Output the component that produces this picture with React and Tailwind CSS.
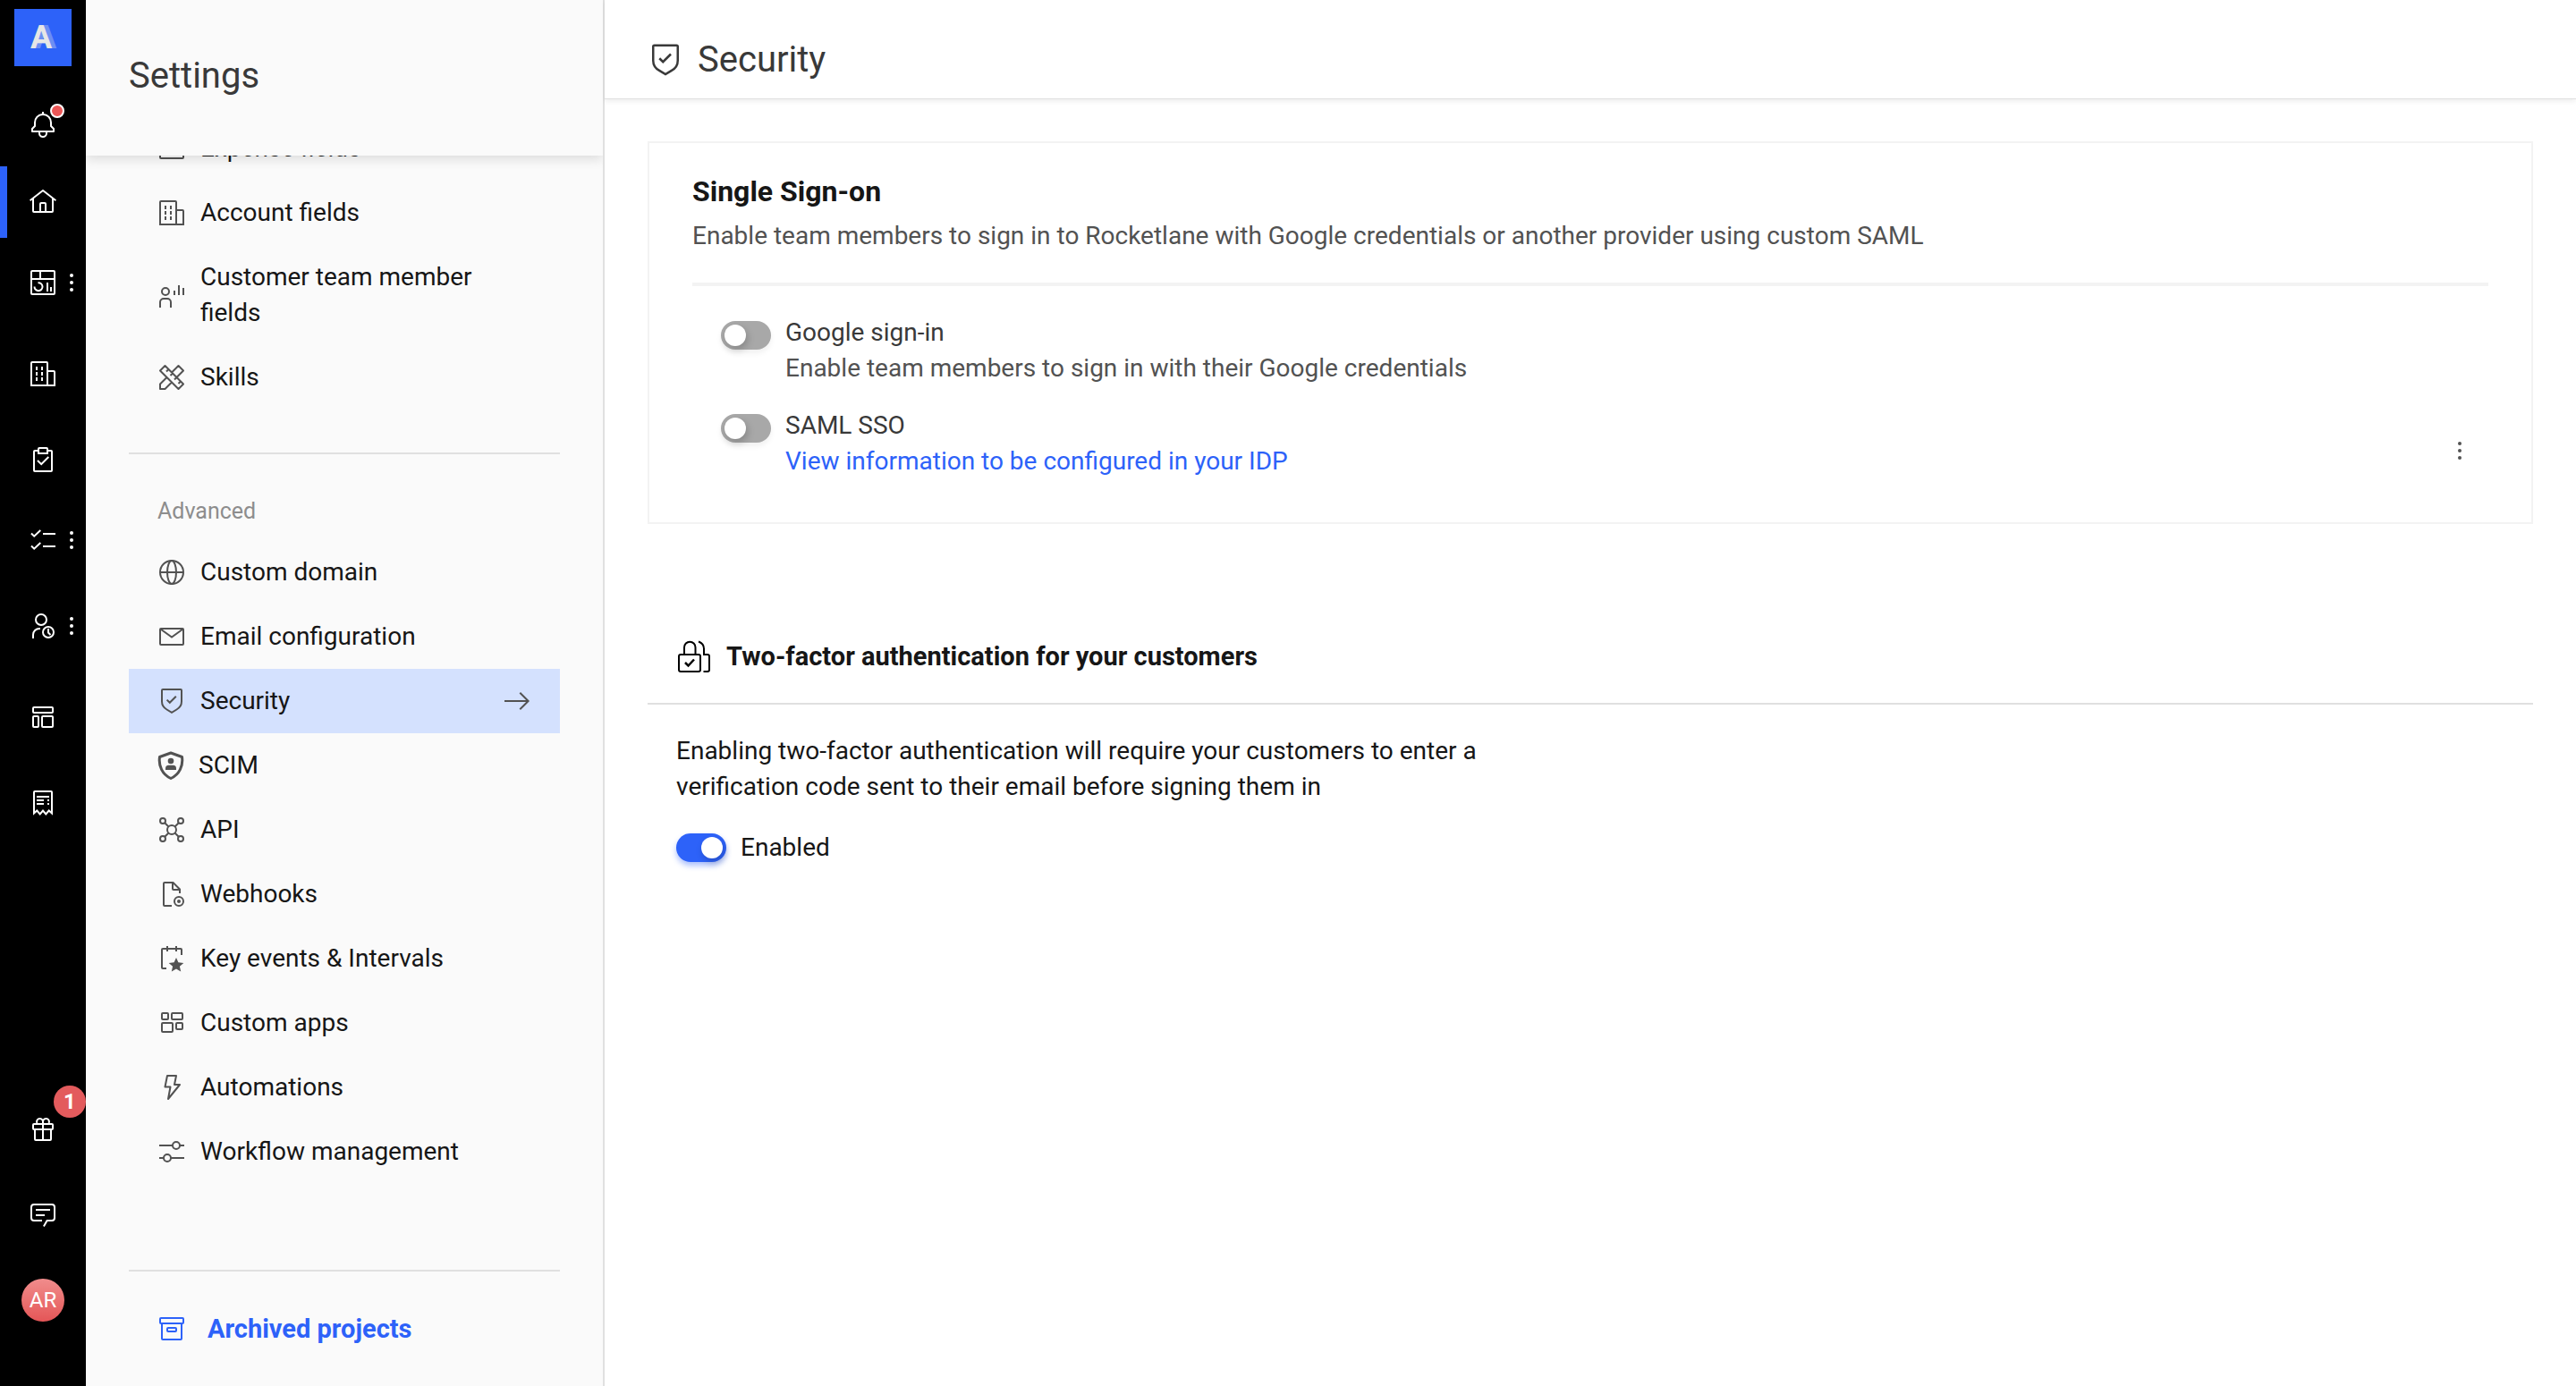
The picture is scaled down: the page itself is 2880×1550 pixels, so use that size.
import { useState } from "react";

const Icon = ({ className = "size-8", box = "0 0 32 32", width = 2, children }) => (
  <svg
    viewBox={box}
    className={`shrink-0 ${className}`}
    fill="none"
    stroke="currentColor"
    strokeWidth={width}
    aria-hidden="true"
  >
    {children}
  </svg>
);

const BellIcon = () => (
  <Icon>
    <path
      fill="currentColor"
      stroke="none"
      d="M28.7 19.3 26 16.6V13a10 10 0 0 0-9-9.95V1h-2v2.05A10 10 0 0 0 6 13v3.6l-2.7 2.7A1 1 0 0 0 3 20v3a1 1 0 0 0 1 1h7v.8a5.15 5.15 0 0 0 4.5 5.2A5 5 0 0 0 21 25v-1h7a1 1 0 0 0 1-1v-3a1 1 0 0 0-.3-.7ZM19 25a3 3 0 0 1-6 0v-1h6Zm8-3H5v-1.6l2.7-2.7A1 1 0 0 0 8 17v-4a8 8 0 0 1 16 0v4a1 1 0 0 0 .3.7l2.7 2.7Z"
    />
  </Icon>
);

const HomeIcon = () => (
  <Icon>
    <path
      fill="currentColor"
      stroke="none"
      d="M16.6 2.2a1 1 0 0 0-1.2 0L1 13.4 2.2 15 4 13.6V26a2 2 0 0 0 2 2h20a2 2 0 0 0 2-2V13.6l1.8 1.4 1.2-1.6ZM18 26h-4v-8h4Zm2 0v-8a2 2 0 0 0-2-2h-4a2 2 0 0 0-2 2v8H6V12l10-7.7L26 12v14Z"
    />
  </Icon>
);

const DashboardIcon = () => (
  <Icon>
    <rect x="3" y="3" width="26" height="26" rx="1" />
    <path d="M3 12h26M13 3v9M21 16v10M25 21v5M10.5 16.2a4.5 4.5 0 1 1-4 4.3" />
  </Icon>
);

const BuildingIcon = () => (
  <Icon>
    <path d="M21 29H3V4a1 1 0 0 1 1-1h16a1 1 0 0 1 1 1v25Zm0-16h7a1 1 0 0 1 1 1v15h-8" />
    <path d="M9 8v4M9 14v4M9 20v4M15 8v4M15 14v4M15 20v4" />
  </Icon>
);

const ClipboardIcon = () => (
  <Icon>
    <path d="M11 6H7a1 1 0 0 0-1 1v21a1 1 0 0 0 1 1h18a1 1 0 0 0 1-1V7a1 1 0 0 0-1-1h-4" />
    <path d="M12 3h8a1 1 0 0 1 1 1v5H11V4a1 1 0 0 1 1-1ZM10 17l4.2 4.2L22.3 13" />
  </Icon>
);

const ChecklistIcon = () => (
  <Icon>
    <path d="m3 8.5 3.2 3.2L13.3 5M16 9h14M3 22.5l3.2 3.2 7.1-6.7M16 23h14" />
  </Icon>
);

const UserClockIcon = () => (
  <Icon>
    <circle cx="14" cy="9" r="6" />
    <path d="M5 30v-4a7 7 0 0 1 7-7h1M22 19v4.5l2.5 2.5" />
    <circle cx="22" cy="23" r="6" />
  </Icon>
);

const TemplateIcon = () => (
  <Icon>
    <rect x="5" y="5" width="22" height="6" rx="1" />
    <rect x="5" y="15" width="6" height="12" rx="1" />
    <rect x="15" y="15" width="12" height="12" rx="1" />
  </Icon>
);

const ReceiptIcon = () => (
  <Icon>
    <path d="M6 27.5V4a1 1 0 0 1 1-1h18a1 1 0 0 1 1 1v23.5l-3.3-3-3.4 4-3.3-4-3.3 4-3.4-4Z" />
    <path d="M9 9h14M9 13h8M9 17h8M21 13h2M21 17h2" />
  </Icon>
);

const GiftIcon = () => (
  <Icon>
    <rect x="5" y="11" width="22" height="6" rx="1" />
    <path d="M7 17v11a1 1 0 0 0 1 1h16a1 1 0 0 0 1-1V17M16 8v21M16 11V7.5a3.5 3.5 0 1 0-6.5 2.5M16 7.5a3.5 3.5 0 1 1 6.5 2.5" />
  </Icon>
);

const ChatIcon = () => (
  <Icon>
    <path d="M15 23H6a3 3 0 0 1-3-3V8a3 3 0 0 1 3-3h20a3 3 0 0 1 3 3v12a3 3 0 0 1-3 3h-5.4l-3.7 6.5M8 11h16M8 17h10" />
  </Icon>
);

const MemberFieldsIcon = () => (
  <Icon>
    <circle cx="9" cy="12" r="4" />
    <path d="M3 30v-6a4 4 0 0 1 4-4h4a4 4 0 0 1 4 4v6M19 11v5M24 5v11M29 8v8" />
  </Icon>
);

const SkillsIcon = () => (
  <Icon>
    <path
      strokeLinejoin="round"
      d="M8.5 3 29 23.5 23.5 29 3 8.5ZM12.5 7 10 9.5M17 11.5 14.5 14M21.5 16 19 18.5M26 20.5 23.5 23M16 10.5 23.5 3 29 8.5 21.5 16M10.5 16 3 23.5V29h5.5l7.5-7.5"
    />
  </Icon>
);

const ExpenseIcon = () => (
  <Icon>
    <rect x="3" y="6" width="26" height="21" rx="1" />
    <path d="M3 12h26" />
  </Icon>
);

const GlobeIcon = () => (
  <Icon>
    <circle cx="16" cy="16" r="13" />
    <ellipse cx="16" cy="16" rx="5" ry="13" />
    <path d="M3 16h26" />
  </Icon>
);

const MailIcon = () => (
  <Icon>
    <rect x="3" y="7" width="26" height="18" rx="1" />
    <path d="m3.5 7.5 12.5 9 12.5-9" />
  </Icon>
);

const ShieldIcon = ({ className }) => (
  <Icon className={className}>
    <path d="M5 4a1 1 0 0 1 1-1h20a1 1 0 0 1 1 1v12.5c0 4-2 7-5.5 9L16 28.9l-5.5-3.4C7 23.5 5 20.5 5 16.5ZM10.6 14.6l3.2 3.2 7-7" />
  </Icon>
);

const ScimIcon = () => (
  <Icon className="h-8 w-[30px]" box="0 0 30 32" width={3}>
    <path
      strokeLinejoin="round"
      d="M15 2 27.5 6.5c1.5 10-3 19.5-12.5 24C5.5 26 1 16.5 2.5 6.5Z"
    />
    <g fill="currentColor" stroke="none">
      <circle cx="15" cy="11" r="3.3" />
      <path d="M9 21v-1.8a3.5 3.5 0 0 1 3.5-3.5h5a3.5 3.5 0 0 1 3.5 3.5V21Z" />
    </g>
  </Icon>
);

const ApiIcon = () => (
  <Icon>
    <circle cx="16" cy="16" r="5" />
    <circle cx="6" cy="6" r="3" />
    <circle cx="26" cy="6" r="3" />
    <circle cx="6" cy="26" r="3" />
    <circle cx="26" cy="26" r="3" />
    <path d="m8.2 8.2 4.3 4.3M23.8 8.2l-4.3 4.3M8.2 23.8l4.3-4.3M23.8 23.8l-4.3-4.3" />
  </Icon>
);

const WebhookIcon = () => (
  <Icon>
    <path d="M16 29H8a1 1 0 0 1-1-1V4a1 1 0 0 1 1-1h9.5l7.5 7.5V15M17 3v7a1 1 0 0 0 1 1h7" />
    <circle cx="24" cy="24" r="5" />
    <circle cx="24" cy="24" r="2" fill="currentColor" stroke="none" />
  </Icon>
);

const KeyEventsIcon = () => (
  <Icon>
    <path d="M10 27H6a1 1 0 0 1-1-1V6a1 1 0 0 1 1-1h20a1 1 0 0 1 1 1v6M11 2v6M21 2v6" />
    <path
      fill="currentColor"
      stroke="none"
      d="m21 15 2.4 5.3 5.9.6-4.4 3.9 1.3 5.7-5.2-2.9-5.2 2.9 1.3-5.7-4.4-3.9 5.9-.6Z"
    />
  </Icon>
);

const AppsIcon = () => (
  <Icon>
    <rect x="5" y="5" width="7" height="7" rx="1" />
    <rect x="16" y="5" width="12" height="7" rx="1" />
    <rect x="5" y="16" width="12" height="10" rx="1" />
    <rect x="21" y="16" width="7" height="7" rx="1" />
  </Icon>
);

const BoltIcon = () => (
  <Icon>
    <path strokeLinejoin="round" d="M11 3h10l-2 10h6L12 29l2.5-13.5h-6Z" />
  </Icon>
);

const WorkflowIcon = () => (
  <Icon>
    <circle cx="21" cy="9" r="4" />
    <circle cx="11" cy="23" r="4" />
    <path d="M2 9h15M25 9h5M2 23h5M15 23h15" />
  </Icon>
);

const ArchiveIcon = () => (
  <Icon>
    <rect x="3" y="4" width="26" height="6" rx="1" />
    <path d="M5 10v17a1 1 0 0 0 1 1h20a1 1 0 0 0 1-1V10" />
    <rect x="11" y="15" width="10" height="4" rx="1" />
  </Icon>
);

const ArrowIcon = () => (
  <Icon>
    <path d="M2 16h26M19.3 6.7l9.3 9.3-9.3 9.3" />
  </Icon>
);

const LocksIcon = () => (
  <Icon className="size-10 text-black" box="0 0 40 40" width={2}>
    <rect x="3" y="18" width="24" height="19" rx="2" />
    <path d="M9 18v-8a6 6 0 0 1 12.500 0v8M25 3.500c4 1.500 6 4 6 8V18h4a2 2 0 0 1 2 2v15a2 2 0 0 1-2 2h-4.500" />
    <path strokeWidth="2.500" d="m10 27 3.500 3.500 6.500-7" />
  </Icon>
);

const Dots = () => (
  <svg viewBox="0 0 4 20" className="h-5 w-1" fill="currentColor" aria-hidden="true">
    <circle cx="2" cy="2" r="2" />
    <circle cx="2" cy="10" r="2" />
    <circle cx="2" cy="18" r="2" />
  </svg>
);

const railItems = [
  { name: "Home", icon: <HomeIcon />, active: true },
  { name: "Dashboards", icon: <DashboardIcon />, more: true },
  { name: "Accounts", icon: <BuildingIcon /> },
  { name: "Projects", icon: <ClipboardIcon /> },
  { name: "Tasks", icon: <ChecklistIcon />, more: true },
  { name: "Resources", icon: <UserClockIcon />, more: true },
  { name: "Templates", icon: <TemplateIcon /> },
  { name: "Invoices", icon: <ReceiptIcon /> },
];

const fieldItems = [
  { name: "Expense fields", icon: <ExpenseIcon /> },
  { name: "Account fields", icon: <BuildingIcon /> },
  { name: "Customer team member fields", icon: <MemberFieldsIcon /> },
  { name: "Skills", icon: <SkillsIcon /> },
];

const advancedItems = [
  { name: "Custom domain", icon: <GlobeIcon /> },
  { name: "Email configuration", icon: <MailIcon /> },
  { name: "Security", icon: <ShieldIcon />, active: true },
  { name: "SCIM", icon: <ScimIcon /> },
  { name: "API", icon: <ApiIcon /> },
  { name: "Webhooks", icon: <WebhookIcon /> },
  { name: "Key events & Intervals", icon: <KeyEventsIcon /> },
  { name: "Custom apps", icon: <AppsIcon /> },
  { name: "Automations", icon: <BoltIcon /> },
  { name: "Workflow management", icon: <WorkflowIcon /> },
];

const Rail = () => (
  <nav aria-label="Main" className="flex w-24 shrink-0 flex-col bg-black pt-[10px] pb-12 text-white">
    <a
      href="#"
      className="mx-4 flex size-16 items-center justify-center bg-[#2d62f9] pr-1 text-4xl font-bold text-[#e6e6e6] [text-shadow:5px_0_0_rgba(230,230,230,0.35)]"
    >
      A
    </a>
    <button aria-label="Notifications" className="mt-7 flex h-[76px] items-center justify-center">
      <span className="relative">
        <BellIcon />
        <span className="absolute -top-2 -right-2 size-4 rounded-full border-2 border-white bg-[#eb5757]" />
      </span>
    </button>

    {railItems.map((item) => (
      <div
        key={item.name}
        className={`relative flex h-24 items-center justify-center ${item.more ? "pb-3" : ""}`}
      >
        {item.active && <span className="absolute inset-y-2 left-0 w-2 bg-[#2d62f9]" />}
        <a href="#" aria-label={item.name}>
          {item.icon}
        </a>
        {item.more && (
          <button aria-label={`${item.name} menu`} className="absolute right-[14px]">
            <Dots />
          </button>
        )}
      </div>
    ))}

    <button aria-label="What's new" className="relative mt-auto flex h-24 items-center justify-center">
      <GiftIcon />
      <span className="absolute top-0 right-0 flex size-9 items-center justify-center rounded-full bg-[#e35b5d] text-2xl font-bold">
        1
      </span>
    </button>
    <button aria-label="Chat" className="flex h-24 items-center justify-center">
      <ChatIcon />
    </button>
    <button className="flex h-24 items-center justify-center">
      <span className="flex size-12 items-center justify-center rounded-full bg-linear-to-b from-[#f08c8c] to-[#e45557] text-2xl">
        AR
      </span>
    </button>
  </nav>
);

const MenuItem = ({ item }) => (
  <a
    href="#"
    className={`flex items-center gap-4 px-8 py-4 text-[#525252] ${item.active ? "bg-[#d4e1fe]" : ""}`}
  >
    {item.icon}
    <span className="flex-1 text-[#161616]">{item.name}</span>
    {item.active && <ArrowIcon />}
  </a>
);

const SettingsPanel = () => (
  <aside className="flex w-[580px] shrink-0 flex-col overflow-hidden border-r-2 border-[#e0e0e0] bg-[#fafafa]">
    <div className="relative z-10 flex h-[174px] shrink-0 items-center bg-[#fafafa] px-12 pb-1 shadow-[0_4px_12px_rgba(0,0,0,0.12)]">
      <h1 className="text-[40px] leading-[52px] text-[#393939]">Settings</h1>
    </div>

    {/* list is scrolled a bit, first item goes under the header */}
    <div className="-mt-11 px-12">
      {fieldItems.map((item) => (
        <MenuItem key={item.name} item={item} />
      ))}

      <div className="mt-12 border-t-2 border-[#e0e0e0] pt-12">
        <h2 className="mb-4 px-8 text-[25px] leading-8 text-[#8d8d8d]">Advanced</h2>
        {advancedItems.map((item) => (
          <MenuItem key={item.name} item={item} />
        ))}
      </div>

      <div className="mt-24 border-t-2 border-[#e0e0e0] pt-7">
        <a
          href="#"
          className="flex items-center gap-6 px-8 py-4 text-[29px] leading-10 font-bold text-[#2d62f9]"
        >
          <ArchiveIcon />
          Archived projects
        </a>
      </div>
    </div>
  </aside>
);

const Toggle = ({ id, checked, onChange }) => (
  <input
    id={id}
    type="checkbox"
    role="switch"
    checked={checked}
    onChange={onChange}
    className="relative h-8 w-14 shrink-0 cursor-pointer appearance-none rounded-full bg-[#a8a8a8] shadow-[0_4px_6px_rgba(0,0,0,0.06)] before:absolute before:top-1 before:left-1 before:size-6 before:rounded-full before:bg-white before:shadow-[2px_4px_8px_rgba(0,0,0,0.2)] checked:bg-[#2d62f9] checked:shadow-[0_4px_6px_rgba(45,98,249,0.4)] checked:before:left-7"
  />
);

export default () => {
  const [google, setGoogle] = useState(false);
  const [saml, setSaml] = useState(false);
  const [twoFactor, setTwoFactor] = useState(true);

  return (
    <div className="flex h-screen overflow-hidden bg-white font-['Roboto',sans-serif] text-[28px] leading-10 text-[#161616]">
      <Rail />
      <SettingsPanel />

      <main className="min-w-0 flex-1">
        <header className="flex h-[111px] items-center gap-4 border-b border-[#e0e0e0] px-12 pt-6 text-[#393939] shadow-[0_2px_6px_rgba(0,0,0,0.08)]">
          <ShieldIcon className="size-10" />
          <h2 className="text-[40px] leading-[52px]">Security</h2>
        </header>

        <div className="px-12 pt-[47px]">
          <section className="border-2 border-[#f3f3f3] px-12 pt-8 pb-12">
            <h3 className="text-[32px] leading-[44px] font-bold">Single Sign-on</h3>
            <p className="mt-2 text-[#525252]">
              Enable team members to sign in to Rocketlane with Google credentials or another
              provider using custom SAML
            </p>

            <div className="mt-8 flex flex-col gap-6 border-t-4 border-[#f3f3f3] pt-8 pl-8">
              <div className="flex items-start gap-4">
                <span className="flex pt-[7px]">
                  <Toggle id="google" checked={google} onChange={() => setGoogle(!google)} />
                </span>
                <div>
                  <label htmlFor="google" className="block text-[#393939]">
                    Google sign-in
                  </label>
                  <p className="text-[#525252]">
                    Enable team members to sign in with their Google credentials
                  </p>
                </div>
              </div>

              <div className="flex items-start gap-4">
                <span className="flex pt-[7px]">
                  <Toggle id="saml" checked={saml} onChange={() => setSaml(!saml)} />
                </span>
                <div className="flex-1">
                  <label htmlFor="saml" className="block text-[#393939]">
                    SAML SSO
                  </label>
                  <a href="#" className="block text-[#2d62f9]">
                    View information to be configured in your IDP
                  </a>
                </div>
                <button
                  aria-label="SAML options"
                  className="mt-8 mr-4 flex size-8 items-center justify-center text-[#525252]"
                >
                  <Dots />
                </button>
              </div>
            </div>
          </section>

          <section className="mt-32">
            <div className="flex items-center gap-4 border-b-2 border-[#e0e0e0] px-8 pb-8">
              <LocksIcon />
              <h3 className="text-[29px] leading-10 font-bold">
                Two-factor authentication for your customers
              </h3>
            </div>
            <div className="px-8 pt-8">
              <p className="max-w-[960px]">
                Enabling two-factor authentication will require your customers to enter a
                verification code sent to their email before signing them in
              </p>
              <div className="mt-7 flex items-center gap-4">
                <Toggle
                  id="two-factor"
                  checked={twoFactor}
                  onChange={() => setTwoFactor(!twoFactor)}
                />
                <label htmlFor="two-factor">{twoFactor ? "Enabled" : "Disabled"}</label>
              </div>
            </div>
          </section>
        </div>
      </main>
    </div>
  );
};
